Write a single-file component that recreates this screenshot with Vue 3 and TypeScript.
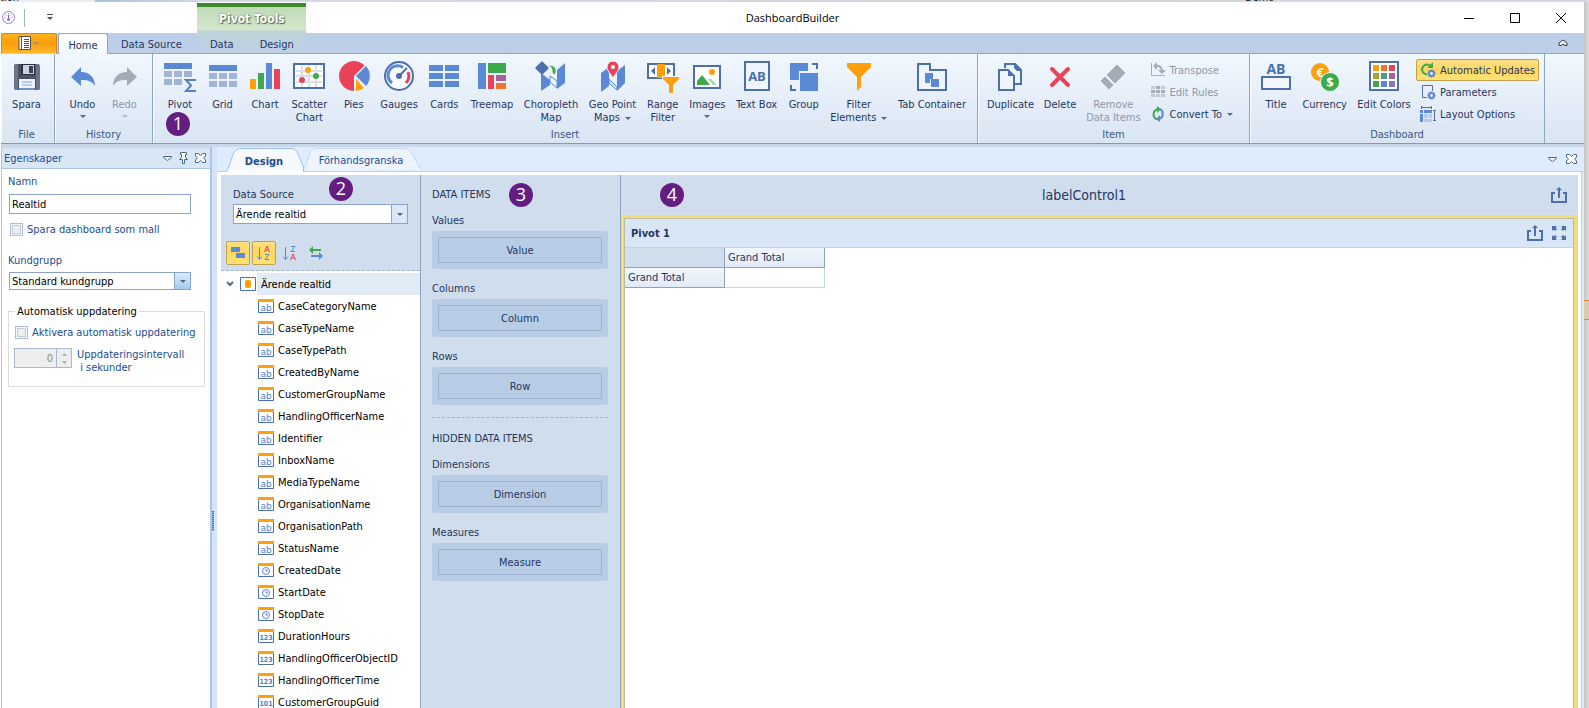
<script setup lang="ts">
import { ref } from 'vue'

interface RibbonItem {
  label: string[]
  icon: string
  arrow?: boolean
  disabled?: boolean
}
interface SmallItem {
  label: string
  icon: string
  arrow?: boolean
  disabled?: boolean
  active?: boolean
}
interface RibbonGroup {
  name: string
  items: RibbonItem[]
  small?: SmallItem[]
}

const groups: RibbonGroup[] = [
  { name: 'File', items: [{ label: ['Spara'], icon: 'save' }] },
  {
    name: 'History',
    items: [
      { label: ['Undo'], icon: 'undo', arrow: true },
      { label: ['Redo'], icon: 'redo', arrow: true, disabled: true },
    ],
  },
  {
    name: 'Insert',
    items: [
      { label: ['Pivot'], icon: 'pivot' },
      { label: ['Grid'], icon: 'grid' },
      { label: ['Chart'], icon: 'chart' },
      { label: ['Scatter', 'Chart'], icon: 'scatter' },
      { label: ['Pies'], icon: 'pies' },
      { label: ['Gauges'], icon: 'gauges' },
      { label: ['Cards'], icon: 'cards' },
      { label: ['Treemap'], icon: 'treemap' },
      { label: ['Choropleth', 'Map'], icon: 'choropleth' },
      { label: ['Geo Point', 'Maps'], icon: 'geo', arrow: true },
      { label: ['Range', 'Filter'], icon: 'range' },
      { label: ['Images'], icon: 'images', arrow: true },
      { label: ['Text Box'], icon: 'textbox' },
      { label: ['Group'], icon: 'group' },
      { label: ['Filter', 'Elements'], icon: 'filter', arrow: true },
      { label: ['Tab Container'], icon: 'tabs' },
    ],
  },
  {
    name: 'Item',
    items: [
      { label: ['Duplicate'], icon: 'duplicate' },
      { label: ['Delete'], icon: 'remove' },
      { label: ['Remove', 'Data Items'], icon: 'eraser', disabled: true },
    ],
    small: [
      { label: 'Transpose', icon: 'transpose', disabled: true },
      { label: 'Edit Rules', icon: 'rules', disabled: true },
      { label: 'Convert To', icon: 'convert', arrow: true },
    ],
  },
  {
    name: 'Dashboard',
    items: [
      { label: ['Title'], icon: 'title' },
      { label: ['Currency'], icon: 'currency' },
      { label: ['Edit Colors'], icon: 'colors' },
    ],
    small: [
      { label: 'Automatic Updates', icon: 'auto', active: true },
      { label: 'Parameters', icon: 'params' },
      { label: 'Layout Options', icon: 'layout' },
    ],
  },
]

const gear = `<g fill="#5a89d6"><circle cx="11.5" cy="11.5" r="3.2"/><path d="M10.500 7.500h2v8h-2zM7.500 10.500h8v2h-8zM8 9.300l1.300-1.300 5.700 5.700-1.300 1.300zM13.700 8l1.300 1.300-5.700 5.700L8 13.700z"/></g><circle cx="11.5" cy="11.5" r="1.4" fill="#eef4fc"/>`

const icons: Record<string, string> = {
  save: `<path d="M4 4h22l2 2v22l-2 2H4V4z" fill="#4a5263"/><path d="M3 5l1-1h3v26H4l-1-1zM25 4h3l1 2v23l-1 1h-3z" fill="#6d7688"/><rect x="10" y="4" width="14" height="11" fill="#2b3242"/><rect x="12" y="5" width="11" height="9" fill="#cdd5e2"/><rect x="18" y="6" width="4" height="7" fill="#38405a"/><rect x="8" y="19" width="16" height="11" fill="#eef3f9"/><path d="M11 22h10M11 25h10" stroke="#8ea4c4"/><rect x="8" y="28" width="16" height="2" fill="#6b93cc"/>`,
  undo: `<path d="M4 17 14 7v5c9 0 14 6 14 14-3-5-7-6-14-6v6z" fill="#5a89d6"/>`,
  redo: `<path d="M28 17 18 7v5c-9 0-14 6-14 14 3-5 7-6 14-6v6z" fill="#a4acb8"/>`,
  pivot: `<path d="M0 3h28v6H0z" fill="#5a89d6"/><path d="M0 11h8v6H0zM10 11h8v6h-8zM20 11h8v6h-8zM0 19h8v6H0zM10 19h8v6h-8z" fill="#a0b4d6"/><path d="M32 20H22l5 5.500-5 5.500h10" fill="none" stroke="#5a7fc0" stroke-width="2"/>`,
  grid: `<path d="M2 5h28v6H2z" fill="#5a89d6"/><path d="M2 13h8v6H2zM12 13h8v6h-8zM22 13h8v6h-8zM2 21h8v6H2zM12 21h8v6h-8zM22 21h8v6h-8z" fill="#a0b4d6"/>`,
  chart: `<path d="M1 19h6v10H1z" fill="#ff9f0a"/><path d="M9 13h6v16H9z" fill="#3faa4c"/><path d="M17 3h6v26h-6z" fill="#5a89d6"/><path d="M25 9h6v20h-6z" fill="#e84358"/>`,
  scatter: `<rect x="1" y="4" width="30" height="24" fill="#fff" stroke="#4c70ab" stroke-width="2"/><path d="M3 11h26M3 16h26M3 22h26M9 5v22M16 5v22M23 5v22" stroke="#dbe0e8" stroke-width="2"/><circle cx="15" cy="10" r="3" fill="#ff9f0a"/><circle cx="23" cy="16" r="3" fill="#3faa4c"/><circle cx="9" cy="20" r="3" fill="#e84358"/>`,
  pies: `<path d="M16 16 26.600 5.400A15 15 0 1 0 16 31z" fill="#e84358"/><path d="M18 16 28 6a15 15 0 0 1 0 20z" fill="#5a89d6"/><path d="M18 19l8 9a14 14 0 0 1-8 3z" fill="#ff9f0a"/>`,
  gauges: `<circle cx="16" cy="16" r="14" fill="#f7fafe" stroke="#4c70ab" stroke-width="2"/><path d="M9 23A9.500 9.500 0 0 1 20 7.500" fill="none" stroke="#5a89d6" stroke-width="3"/><path d="M25 12a10 10 0 0 1-2 11" fill="none" stroke="#e84358" stroke-width="3"/><path d="M16 16l8-8" stroke="#4c70ab" stroke-width="2"/><circle cx="16" cy="16" r="3" fill="#4c70ab"/>`,
  cards: `<path d="M1 5h14v6H1zM17 5h14v6H17zM1 13h14v6H1zM17 13h14v6H17zM1 21h14v6H1zM17 21h14v6H17z" fill="#5a89d6"/>`,
  treemap: `<path d="M2 3h8v26H2z" fill="#5a89d6"/><path d="M12 3h18v10H12z" fill="#3faa4c"/><path d="M12 15h6v14h-6z" fill="#e84358"/><path d="M20 15h10v6H20z" fill="#a5639c"/><path d="M20 23h10v6H20z" fill="#f3722c"/>`,
  choropleth: `<path d="M6 13l9 7v5l-9 6zM22 10l8-7v20l-8 6z" fill="#5a89d6"/><path d="M15 16l7 5v7l-7-6z" fill="#eef5fd" stroke="#5a89d6"/><rect x="2" y="3" width="10" height="10" rx="1" transform="rotate(45 7 8)" fill="#4c70ab"/><path d="M13 5c7 0 10 4 7 10-3-1-3-3-3-5 0-2-2-4-4-5z" fill="#3faa4c" stroke="#eef5fd"/>`,
  geo: `<path d="M5 13l8-6v19l-8 6zM21 11l8-6v18l-8 8z" fill="#5a89d6"/><path d="M13 19l8 8v3l-8-7z" fill="#dbe7f9" stroke="#5a89d6"/><path d="M17 1a6 6 0 0 1 6 6c0 4-4 7-6 11-2-4-6-7-6-11a6 6 0 0 1 6-6z" fill="#e84358" stroke="#eef5fd" /><circle cx="17" cy="7" r="2" fill="#fff"/>`,
  range: `<rect x="1" y="4" width="26" height="14" fill="#fff" stroke="#4c70ab" stroke-width="2"/><path d="M10 4h8v14h-8z" fill="#ff9f0a"/><path d="M8 7v8l-4-4zM20 7v8l4-4z" fill="#4c70ab"/><path d="M15 16h18v3l-6 7v7h-6v-7l-6-7z" fill="#eef5fd"/><path d="M16 17h16v2l-6 6v8h-4v-8l-6-6z" fill="#ff9f0a"/>`,
  images: `<rect x="3" y="6" width="26" height="22" fill="#fff" stroke="#4c70ab" stroke-width="2"/><path d="M6 25v-4l5-6 8 10z" fill="#3faa4c"/><path d="M17 19h3l6 6h-4z" fill="#a6d8ae"/><circle cx="21" cy="12" r="3" fill="#ff9f0a"/>`,
  textbox: `<rect x="4" y="2" width="24" height="28" fill="#eef5fd" stroke="#4c70ab" stroke-width="2"/><text x="16" y="21" text-anchor="middle" font-family="Open Sans, sans-serif" font-weight="700" font-size="13" fill="#4c70ab">AB</text>`,
  group: `<path d="M2 3h18v8h-9v9H2z" fill="#5a89d6"/><path d="M12 13h18v18H12z" fill="#5a89d6"/><path d="M24 4h5v5M3 25v5h5" fill="none" stroke="#4c70ab" stroke-width="2"/>`,
  filter: `<path d="M4 3h24v4l-10 10v10l-4 4V17L4 7z" fill="#ff9f0a"/>`,
  tabs: `<path d="M2 30V4h12v6h16v20z" fill="#eef5fd" stroke="#4c70ab" stroke-width="2"/><path d="M9 13h8v6h-3v4H9z" fill="#5a89d6"/><path d="M15 19h8v8h-8z" fill="#5a89d6"/>`,
  duplicate: `<path d="M11 8V4h10l6 6v14h-6" fill="none" stroke="#4c70ab" stroke-width="2"/><path d="M20 3l8 8h-5l-3-3z" fill="#4c70ab"/><path d="M5 10h9l6 6v14H5z" fill="#eef5fd" stroke="#4c70ab" stroke-width="2"/><path d="M14 9l7 7h-7z" fill="#4c70ab"/>`,
  remove: `<path d="M8 9l16 16M24 9L8 25" stroke="#e84358" stroke-width="4" stroke-linecap="round"/>`,
  eraser: `<path d="M20 5l8 8-10 10-8-8z" fill="#a4acb8" stroke="#a4acb8"/><path d="M8 17l8 8-4 4-8-8z" fill="#a4acb8" stroke="#a4acb8"/>`,
  title: `<text x="16" y="14" text-anchor="middle" font-family="Open Sans, sans-serif" font-weight="700" font-size="14" fill="#4c70ab">AB</text><rect x="2" y="17" width="28" height="12" fill="#f2f7fd" stroke="#4c70ab" stroke-width="2"/>`,
  currency: `<circle cx="11" cy="12" r="9" fill="#ff9f0a"/><text x="11" y="17" text-anchor="middle" font-family="Open Sans, sans-serif" font-weight="700" font-size="13" fill="#fff">€</text><circle cx="21" cy="22" r="9.5" fill="#3faa4c" stroke="#eef5fd"/><text x="21" y="27" text-anchor="middle" font-family="Open Sans, sans-serif" font-weight="700" font-size="13" fill="#fff">$</text>`,
  colors: `<rect x="2" y="2" width="28" height="28" fill="#fff" stroke="#4c70ab" stroke-width="2"/><path d="M5 5h6v6H5z" fill="#ff9f0a"/><path d="M13 5h6v6h-6z" fill="#f3722c"/><path d="M21 5h6v6h-6z" fill="#e84358"/><path d="M5 13h6v6H5z" fill="#a3a52c"/><path d="M13 13h6v6h-6z" fill="#4d9b8e"/><path d="M21 13h6v6h-6z" fill="#a5639c"/><path d="M5 21h6v6H5z" fill="#3faa4c"/><path d="M13 21h6v6h-6z" fill="#5a89d6"/><path d="M21 21h6v6h-6z" fill="#8577b5"/>`,
  transpose: `<path d="M1.500 1v12.500H15" fill="none" stroke="#a4acb8"/><path d="M5 4c5-1 7 2 7 5" fill="none" stroke="#a4acb8" stroke-width="2"/><path d="M7 0v8L3 4zM8 8h8l-4 4z" fill="#a4acb8"/>`,
  rules: `<path d="M1 2h4v3H1zM11 2h4v3h-4zM1 10h4v3H1zM6 10h4v3H6zM11 10h4v3h-4z" fill="#c3cad5"/><path d="M6 2h4v3H6zM1 6h4v3H1zM6 6h4v3H6zM11 6h4v3h-4z" fill="#a4acb8"/>`,
  convert: `<path d="M7 13.500A5.500 5.500 0 0 1 8 3" fill="none" stroke="#3faa4c" stroke-width="2"/><path d="M7 0l4 3-4 4z" fill="#3faa4c"/><path d="M10 3a5.500 5.500 0 0 1-1 10" fill="none" stroke="#5a89d6" stroke-width="2"/><path d="M10 9v7l-4-3z" fill="#5a89d6"/>`,
  auto: `<path d="M7 12.500A5 5 0 1 1 10 3.500" fill="none" stroke="#3faa4c" stroke-width="2"/><path d="M13 0v6H7z" fill="#3faa4c"/>${gear}`,
  params: `<path d="M7 13.500H2.500v-12h10V7" fill="none" stroke="#4c70ab"/>${gear}`,
  layout: `<path d="M1 1.500h11M1.500 0v3M11.500 0v3M14.500 4v11M13 4.500h3M13 14.500h3" stroke="#4c70ab" fill="none"/><path d="M0 4h3v3H0zM4 4h8v3H4zM0 8h3v8H0z" fill="#5a89d6"/><path d="M4 8h4v4H4zM9 8h3v4H9zM4 13h8v3H4z" fill="#b4c8ea"/>`,
}

interface Field {
  name: string
  type: 'ab' | 'date' | '123' | '101'
}
const fields: Field[] = [
  ...[
    'CaseCategoryName', 'CaseTypeName', 'CaseTypePath', 'CreatedByName', 'CustomerGroupName',
    'HandlingOfficerName', 'Identifier', 'InboxName', 'MediaTypeName', 'OrganisationName',
    'OrganisationPath', 'StatusName',
  ].map((name): Field => ({ name, type: 'ab' })),
  ...['CreatedDate', 'StartDate', 'StopDate'].map((name): Field => ({ name, type: 'date' })),
  ...['DurationHours', 'HandlingOfficerObjectID', 'HandlingOfficerTime'].map((name): Field => ({ name, type: '123' })),
  { name: 'CustomerGroupGuid', type: '101' },
]

const dataSections = [
  { title: 'DATA ITEMS', slots: [['Values', 'Value'], ['Columns', 'Column'], ['Rows', 'Row']] },
  { title: 'HIDDEN DATA ITEMS', slots: [['Dimensions', 'Dimension'], ['Measures', 'Measure']] },
]

const name = ref('Realtid')
const asTemplate = ref(false)
const autoUpdate = ref(false)
const interval = ref(0)
</script>

<template>
  <div class="desktop">
    <div class="behind" aria-hidden="true"><span>tion</span><i></i><span class="far">Demo</span></div>
    <div class="window">
      <header class="head">
        <div class="quick">
          <svg width="17" height="17" viewBox="0 0 17 17">
            <defs><linearGradient id="lg" x2="0" y2="1"><stop stop-color="#b06be8" /><stop offset="1" stop-color="#7c86f4" /></linearGradient></defs>
            <circle cx="7.5" cy="8.5" r="6" fill="none" stroke="url(#lg)" />
            <path d="M7.500 4v1M3.500 8.500h1M11.500 8.500h-1M4.500 5.500l1 1M10.500 5.500l-1 1" stroke="#a070ee" />
            <path d="M7.500 6v5" stroke="#7a55dd" /><circle cx="7.5" cy="10.5" r="1.500" fill="#8a6cf0" />
          </svg>
          <span class="quick-line"></span>
          <svg width="6" height="7" viewBox="0 0 6 7"><path d="M0 .5h6" stroke="#555" /><path d="M0 3h6L3 6z" fill="#555" /></svg>
        </div>
        <h1 class="title">DashboardBuilder</h1>
        <div class="winbtns">
          <button aria-label="Minimize"><svg width="10" height="10"><path d="M0 5.500h10" stroke="#000" /></svg></button>
          <button aria-label="Maximize"><svg width="10" height="10"><path d="M.5.5h9v9h-9z" stroke="#000" fill="none" /></svg></button>
          <button aria-label="Close"><svg width="10" height="10"><path d="M0 0l10 10M10 0L0 10" stroke="#000" /></svg></button>
        </div>
        <nav class="tabs-left">
          <button class="app-btn" aria-label="Application menu">
            <svg width="22" height="15" viewBox="0 0 22 15">
              <path d="M1 .5h11.500v13H1z" fill="#fff" stroke="#555" /><path d="M3.500 1v12" stroke="#555" /><path d="M6 3.500h5M6 5.500h5M6 7.500h5M6 9.500h5M6 11.500h5" stroke="#555" />
              <path d="M15 6h6l-3 3z" fill="#a8926a" />
            </svg>
          </button>
          <button class="rtab active">Home</button>
          <button class="rtab">Data Source</button>
        </nav>
        <div class="context">
          <strong>Pivot Tools</strong>
          <div class="context-tabs"><button class="rtab">Data</button><button class="rtab">Design</button></div>
        </div>
        <div class="tabs-right">
          <button aria-label="Collapse ribbon"><svg width="10" height="8" viewBox="0 0 10 8"><path d="M1 4l4-3 4 3v2.500H7L5 5 3 6.500H1z" fill="#fff" stroke="#2a3a55" /></svg></button>
        </div>
      </header>

      <section class="ribbon">
        <div v-for="g in groups" :key="g.name" class="rgroup" :class="'g-' + g.name.toLowerCase()">
          <div class="rbody">
            <button v-for="b in g.items" :key="b.icon" class="big" :disabled="b.disabled">
              <svg width="32" height="32" viewBox="0 0 32 32" overflow="visible" v-html="icons[b.icon]"></svg>
              <span v-for="(l, i) in b.label" :key="i">{{ l }}<i v-if="b.arrow && i === 1" class="arrow inline"></i></span>
              <i v-if="b.arrow && b.label.length === 1" class="arrow under"></i>
            </button>
            <div v-if="g.small" class="smalls">
              <button v-for="s in g.small" :key="s.label" class="small" :class="{ on: s.active }" :disabled="s.disabled">
                <svg width="16" height="16" viewBox="0 0 16 16" v-html="icons[s.icon]"></svg>
                <span>{{ s.label }}</span><i v-if="s.arrow" class="arrow inline"></i>
              </button>
            </div>
          </div>
          <div class="rcaption">{{ g.name }}</div>
        </div>
        <span class="badge b1">1</span>
      </section>

      <main class="dock">
        <aside class="props">
          <div class="props-head">
            <h2>Egenskaper</h2>
            <button aria-label="Menu"><svg width="9" height="7" viewBox="0 0 9 7"><path d="M.5 1.500h8v1l-4 3-4-3z" fill="#fff" stroke="#47698c" /></svg></button>
            <button aria-label="Pin"><svg width="9" height="12" viewBox="0 0 9 12"><path d="M1.500.5h6v2h-1v3l2 2h-3v4h-2v-4h-3l2-2v-3h-1z" fill="#fff" stroke="#47698c" /></svg></button>
            <button aria-label="Close"><svg width="11" height="10" viewBox="0 0 11 10"><path d="M.5.5h3l2 2 2-2h3v2.500L8.500 5l2 2v2.500h-3l-2-2-2 2h-3V7l2-2-2-2z" fill="#fff" stroke="#47698c" /></svg></button>
          </div>
          <form class="form" @submit.prevent>
            <label class="lbl" for="namn">Namn</label>
            <input id="namn" v-model="name" class="text" type="text" />
            <label class="check"><input v-model="asTemplate" type="checkbox" />Spara dashboard som mall</label>
            <label class="lbl kund" for="kund">Kundgrupp</label>
            <span class="combo glossy">
              <select id="kund"><option>Standard kundgrupp</option></select>
              <i class="drop"><i class="arrow"></i></i>
            </span>
            <fieldset>
              <legend>Automatisk uppdatering</legend>
              <label class="check"><input v-model="autoUpdate" type="checkbox" />Aktivera automatisk uppdatering</label>
              <div class="spin-row">
                <span class="spin">
                  <input id="iv" v-model="interval" type="text" disabled />
                  <i><svg width="5" height="11" viewBox="0 0 5 11"><path d="M0 3h5L2.500 0zM0 8h5l-2.500 3z" fill="#a9b0bb" /></svg></i>
                </span>
                <label for="iv">Uppdateringsintervall<br />&nbsp;i sekunder</label>
              </div>
            </fieldset>
          </form>
        </aside>
        <div class="splitter"><i></i></div>

        <section class="doc">
          <div class="doc-tabs">
            <button class="dtab sel">
              <svg width="78" height="24" viewBox="0 0 78 24"><path d="M0 24C5 18 6 3 11 1.500Q12 .5 14 .5H66Q69 .5 71 4L77.500 19V24z" fill="#f6faff" stroke="#9dbfe8" /><path d="M1 24h76v-1H1z" fill="#fff" /></svg>
              <span>Design</span>
            </button>
            <button class="dtab">
              <svg width="120" height="23" viewBox="0 0 120 23"><path d="M1 23C5 18 7 3 11 1.500Q12 .5 14 .5H103Q107 .5 109 4L119 22" fill="#edf4fe" stroke="#c3d9f5" /></svg>
              <span>Förhandsgranska</span>
            </button>
            <div class="doc-tools">
              <button aria-label="Menu"><svg width="9" height="7" viewBox="0 0 9 7"><path d="M.5 1.500h8v1l-4 3-4-3z" fill="#fff" stroke="#47698c" /></svg></button>
              <button aria-label="Close"><svg width="11" height="10" viewBox="0 0 11 10"><path d="M.5.5h3l2 2 2-2h3v2.500L8.500 5l2 2v2.500h-3l-2-2-2 2h-3V7l2-2-2-2z" fill="#fff" stroke="#47698c" /></svg></button>
            </div>
          </div>

          <div class="designer">
            <div class="source">
              <div class="source-top">
                <label for="ds">Data Source</label>
                <span class="combo">
                  <select id="ds"><option>Ärende realtid</option></select>
                  <i class="drop"><i class="arrow"></i></i>
                </span>
                <div class="tools">
                  <button class="on" aria-label="Group by type"><svg width="16" height="16"><path d="M1 2h9v5H1zM6 8h9v5H6z" fill="#5a89d6" /></svg></button>
                  <button class="on" aria-label="Sort ascending"><svg width="16" height="16"><path d="M3.500 2v12M1 11.500l2.500 3 2.500-3" stroke="#5a89d6" fill="none" /><path d="M8.500 7l2.500-6 2.500 6M9.500 5h3" stroke="#e84358" fill="none" /><path d="M9 9.500h4l-4 5h4" stroke="#5a89d6" fill="none" /></svg></button>
                  <button aria-label="Sort descending"><svg width="16" height="16"><path d="M3.500 2v12M1 11.500l2.500 3 2.500-3" stroke="#5a89d6" fill="none" /><path d="M9 1.500h4l-4 5h4" stroke="#5a89d6" fill="none" /><path d="M8.500 15L11 9l2.500 6M9.500 13h3" stroke="#e84358" fill="none" /></svg></button>
                  <button aria-label="Refresh"><svg width="16" height="16"><path d="M1 5l4-4v3h8v2H5v3z" fill="#3faa4c" /><path d="M15 11l-4-4v3H3v2h8v3z" fill="#5a89d6" /></svg></button>
                </div>
                <span class="badge b2">2</span>
              </div>
              <ul class="tree">
                <li class="root">
                  <svg width="8" height="6" viewBox="0 0 8 6"><path d="M1 1l3 3 3-3" fill="none" stroke="#5a6a80" stroke-width="2" /></svg>
                  <svg class="db" width="16" height="14" viewBox="0 0 16 14"><path d="M.5.5h15v13H.5z" fill="#fff" stroke="#4c70ab" /><rect x="5" y="3" width="6" height="8" rx="2" fill="#ff9f0a" /></svg>
                  <span>Ärende realtid</span>
                </li>
                <li v-for="f in fields" :key="f.name" class="leaf">
                  <svg width="16" height="14" viewBox="0 0 16 14">
                    <path d="M.5.5h15v13H.5z" fill="#fff" stroke="#4c70ab" /><path d="M0 0h16v3H0z" fill="#ff9f0a" />
                    <g v-if="f.type === 'date'" fill="none" stroke="#5a89d6"><circle cx="8" cy="8" r="3.500" /><path d="M8 6v2h2" /></g>
                    <text v-else-if="f.type === 'ab'" x="8" y="12" text-anchor="middle" class="ab">ab</text>
                    <text v-else x="8" y="11" text-anchor="middle" class="num">{{ f.type }}</text>
                  </svg>
                  <span>{{ f.name }}</span>
                </li>
              </ul>
            </div>

            <div class="items">
              <section v-for="s in dataSections" :key="s.title">
                <h3>{{ s.title }}</h3>
                <div v-for="[label, slot] in s.slots" :key="label" class="slot">
                  <h4>{{ label }}</h4>
                  <div class="well"><button>{{ slot }}</button></div>
                </div>
              </section>
              <span class="badge b3">3</span>
            </div>

            <div class="board">
              <div class="board-head">
                <h2>labelControl1</h2>
                <button aria-label="Export"><svg width="16" height="16" viewBox="0 0 16 16"><path d="M4 6H1v9h14V6h-3" fill="none" stroke="#4c70ab" stroke-width="2" /><path d="M8 11V2" stroke="#4c70ab" stroke-width="2" /><path d="M8 0l3 3H5z" fill="#4c70ab" /></svg></button>
                <span class="badge b4">4</span>
              </div>
              <article class="widget">
                <div class="widget-head">
                  <h3>Pivot 1</h3>
                  <button aria-label="Export"><svg width="16" height="16" viewBox="0 0 16 16"><path d="M4 6H1v9h14V6h-3" fill="none" stroke="#4c70ab" stroke-width="2" /><path d="M8 11V2" stroke="#4c70ab" stroke-width="2" /><path d="M8 0l3 3H5z" fill="#4c70ab" /></svg></button>
                  <button aria-label="Maximize"><svg width="14" height="14" viewBox="0 0 14 14"><path d="M0 0h5L3.500 1.500 5 3 3 5 1.500 3.500 0 5zM14 0v5l-1.500-1.500L11 5 9 3l1.500-1.500L9 0zM0 14V9l1.500 1.500L3 9l2 2-1.500 1.500L5 14zM14 14H9l1.500-1.500L9 11l2-2 1.500 1.500L14 9z" fill="#4c70ab" /></svg></button>
                </div>
                <table class="pivot">
                  <tbody>
                    <tr><td class="corner"></td><th scope="col">Grand Total</th></tr>
                    <tr><th scope="row">Grand Total</th><td class="val"></td></tr>
                  </tbody>
                </table>
              </article>
            </div>
          </div>
        </section>
      </main>
    </div>
    <div class="edge" aria-hidden="true"><i></i></div>
  </div>
</template>

<style>
body {
  margin: 0;
}
</style>

<style scoped>
* {
  box-sizing: border-box;
}
.desktop {
  height: 100vh;
  display: grid;
  grid-template: 2px minmax(0, 1fr) / minmax(0, 1fr) 5px;
  overflow: hidden;
  background: #e2e2e2;
  font: 11px/13px 'DejaVu Sans Condensed', 'DejaVu Sans', sans-serif;
  color: #1f3763;
}
button {
  font: inherit;
  color: inherit;
  border: 0;
  padding: 0;
  background: none;
}
h1, h2, h3, h4 {
  margin: 0;
  font: inherit;
}
svg {
  display: block;
  flex: none;
}
.behind {
  grid-column: 1 / 3;
  display: flex;
  align-items: flex-end;
  overflow: hidden;
  background: #d5d9df;
  color: #222;
  line-height: 9px;
}
.behind span {
  padding-right: 76px;
  background: #e8ebef;
}
.behind i {
  flex: 1;
  height: 2px;
  background: linear-gradient(90deg, #a9c2dd, #d4dae2 10%, #d4d6da);
}
.behind .far {
  width: 344px;
  padding: 0;
  background: #d5d9df;
}
.window {
  display: flex;
  flex-direction: column;
  min-height: 0;
  padding-left: 1px;
  background: #fff;
}
.edge {
  background: linear-gradient(90deg, #c4c4c4, #dedede);
  padding-top: 298px;
}
.edge i {
  display: block;
  height: 20px;
  background: #d8ccb0;
  border: solid #e08a30;
  border-width: 1px 0;
}

/* title bar and tabs */
.head {
  flex: none;
  display: grid;
  grid-template: 31px 21px / 196px 109px 1fr;
}
.quick {
  grid-area: 1 / 1;
  display: flex;
  align-items: center;
}
.quick-line {
  width: 1px;
  height: 18px;
  margin: 0 22px 0 6px;
  background: #9bb2cc;
}
.title {
  grid-area: 1 / 1 / 2 / 4;
  place-self: center;
  font: 11px/16px 'Open Sans', 'Noto Sans', sans-serif;
  color: #000;
}
.winbtns {
  grid-area: 1 / 3;
  justify-self: end;
  display: flex;
}
.winbtns button {
  width: 46px;
  display: grid;
  place-items: center;
}
.tabs-left {
  grid-area: 2 / 1;
  display: flex;
  background: #bdcfe8;
  border-bottom: 1px solid #8ea7c9;
}
.app-btn {
  width: 56px;
  height: 21px;
  display: grid;
  place-items: center;
  background: linear-gradient(#ffb31c, #fb9d0a 50%, #ffb92a);
  border: 1px solid #d9822b;
  border-bottom-color: #ffcf5c;
  border-radius: 3px 3px 0 0;
  flex: none;
}
.rtab {
  flex: none;
  padding: 3px 13px 0;
  white-space: nowrap;
}
.rtab.active {
  width: 50px;
  height: 21px;
  margin-left: 1px;
  padding: 2px 0 0;
  background: linear-gradient(#fff, #f1f7fe);
  border: 1px solid #8ea7c9;
  border-bottom: 0;
  border-radius: 3px 3px 0 0;
}
.context {
  grid-area: 1 / 2 / 3 / 3;
  display: grid;
  grid-template-rows: 1fr 21px;
  text-align: center;
  margin-top: 1px;
  border-top: 4px solid #3f8a2c;
  background: linear-gradient(#bfdab8, #d3e6cd 50%, #bdd4d6 52%, #bdcfe8);
  border-bottom: 1px solid #8ea7c9;
  z-index: 1;
}
.context strong {
  align-self: center;
  font-size: 12px;
  color: #fff;
  text-shadow: 1px 1px 1px #4a6a4a, 0 0 2px #5f8060;
}
.context-tabs {
  display: flex;
  justify-content: center;
}
.tabs-right {
  grid-area: 2 / 3;
  display: flex;
  justify-content: flex-end;
  align-items: center;
  padding-right: 16px;
  background: #bdcfe8;
  border-bottom: 1px solid #8ea7c9;
}

/* ribbon */
.ribbon {
  position: relative;
  flex: none;
  display: flex;
  height: 90px;
  background: linear-gradient(#f1f7fe, #e3ecf8 60%, #d9e5f2);
  border-bottom: 1px solid #8399b8;
}
.rgroup {
  display: flex;
  flex-direction: column;
  border-right: 1px solid #8ea5c4;
  box-shadow: inset 1px 0 #f6faff;
  padding: 5px 4px 0;
}
.g-file {
  width: 54px;
  padding: 5px 5px 0 3px;
}
.g-history {
  width: 98px;
}
.g-insert {
  width: 825px;
  padding: 5px 6px 0;
}
.g-item {
  width: 272px;
}
.g-dashboard {
  width: 295px;
  padding: 5px 5px 0;
}
.rbody {
  display: flex;
  flex: 1;
  justify-content: space-between;
}
.g-file .rbody,
.g-history .rbody {
  justify-content: center;
}
.rcaption {
  text-align: center;
  height: 15px;
  color: #3b5886;
}
.big {
  min-width: 42px;
  padding: 1px 5px 0;
  display: flex;
  flex-direction: column;
  align-items: center;
  white-space: nowrap;
}
.big svg {
  margin-bottom: 6px;
}
button:disabled {
  color: #8e98a8;
}
.arrow {
  display: inline-block;
  border: 3px solid transparent;
  border-top-color: #5b6880;
  border-bottom: 0;
}
.arrow.inline {
  margin-left: 5px;
  vertical-align: middle;
}
.arrow.under {
  margin-top: 4px;
}
button:disabled .arrow {
  border-top-color: #b3bac6;
}
.smalls {
  display: flex;
  flex-direction: column;
  align-items: flex-start;
}
.small {
  height: 22px;
  padding: 0 3px;
  display: flex;
  align-items: center;
  gap: 4px;
  border: 1px solid transparent;
  white-space: nowrap;
}
.small .arrow.inline {
  margin-left: 1px;
}
.small.on,
.tools .on {
  background: linear-gradient(#fddf85, #fed75e 50%, #ffe277);
  border: 1px solid #c5a04a;
  border-radius: 2px;
}
.g-item .rbody {
  padding-right: 8px;
}

/* numbered callouts */
.badge {
  position: absolute;
  width: 24px;
  height: 24px;
  border-radius: 50%;
  background: #641e82;
  color: #fff;
  font: 18px/23px 'Open Sans', 'Noto Sans', sans-serif;
  text-align: center;
}
.b1 {
  left: 165px;
  top: 58px;
}
.b2 {
  left: 108px;
  top: 2px;
}
.b3 {
  left: 88px;
  top: 8px;
}
.b4 {
  left: 39px;
  top: 8px;
}

/* docking area */
.dock {
  flex: 1;
  min-height: 0;
  display: flex;
  padding-top: 3px;
  background: #c9d7ea;
}
.props {
  width: 210px;
  flex: none;
  margin-top: 1px;
  border: solid #a9c5e8;
  border-width: 0 1px;
  background: #fff;
}
.props-head {
  display: flex;
  align-items: center;
  gap: 7px;
  height: 21px;
  padding: 0 4px 0 2px;
  background: #d9e6f6;
  border-bottom: 1px solid #a9c5e8;
  color: #1c4c93;
}
.props-head h2 {
  flex: 1;
}
.form {
  padding: 6px 5px 0 6px;
  color: #1c4c93;
}
.lbl {
  display: block;
}
.text {
  display: block;
  width: 182px;
  height: 20px;
  margin: 6px 0 8px 1px;
  padding: 0 2px;
  border: 1px solid #8ca3c8;
  font: inherit;
  color: #000;
}
.check {
  display: flex;
  align-items: center;
  gap: 4px;
  height: 15px;
  padding-left: 2px;
  white-space: nowrap;
}
.check input {
  appearance: none;
  width: 13px;
  height: 13px;
  margin: 0;
  flex: none;
  background: #eceef1;
  border: 1px solid #a9bfdc;
  box-shadow: inset 0 0 0 1px #f3f6fa, inset 0 0 0 2px #c8cbd0;
}
.kund {
  margin: 17px 0 5px;
}
.combo {
  display: flex;
  position: relative;
  height: 20px;
  background: #fff;
  border: 1px solid #8ca3c8;
}
.combo select {
  flex: 1;
  appearance: none;
  border: 0;
  margin: 0;
  padding: 0 20px 0 2px;
  background: none;
  font: inherit;
  color: #000;
}
.drop {
  position: absolute;
  right: 0;
  top: 0;
  bottom: 0;
  width: 16px;
  display: grid;
  place-items: center;
  border-left: 1px solid #8ca3c8;
  background: #dbe8f8;
  pointer-events: none;
}
.glossy {
  width: 182px;
  height: 18px;
  margin-left: 1px;
}
.glossy .drop {
  background: linear-gradient(#dcebfb, #a5caf3);
}
fieldset {
  margin: 15px 0 0;
  min-width: 0;
  height: 82px;
  padding: 7px 0 0 4px;
  border: 1px solid #dcdcdc;
}
legend {
  margin-left: 2px;
  padding: 0 2px;
  color: #000;
}
.spin-row {
  display: flex;
  margin-top: 8px;
  gap: 5px;
  padding-left: 1px;
}
.spin {
  display: flex;
  width: 58px;
  height: 20px;
  background: #eee;
  border: 1px solid #a9b9d2;
}
.spin input {
  width: 41px;
  border: 0;
  padding: 0 3px;
  text-align: right;
  font: inherit;
  color: #8b8b8b;
  background: none;
}
.spin i {
  flex: 1;
  display: grid;
  place-items: center;
  border-left: 1px solid #a9b9d2;
}
.splitter {
  width: 6px;
  flex: none;
  background: #d5e3f6;
  border-left: 1px solid #a9c5e8;
  display: flex;
  align-items: center;
  padding-top: 186px;
}
.splitter i {
  width: 2px;
  height: 20px;
  background: repeating-linear-gradient(#4677b8 0 1px, #8fb1de 1px 2px);
}
.doc {
  flex: 1;
  min-width: 0;
  display: flex;
  flex-direction: column;
  background: #dfecfe;
}
.doc-tabs {
  flex: none;
  height: 25px;
  display: flex;
  align-items: flex-end;
  padding-left: 9px;
  border-bottom: 1px solid #b9d3f5;
  color: #1c4c93;
}
.dtab {
  position: relative;
  width: 76px;
  height: 24px;
  padding-top: 2px;
}
.dtab svg {
  position: absolute;
  left: 0;
  bottom: 0;
}
.dtab span {
  position: relative;
}
.dtab.sel {
  font-weight: 700;
  z-index: 1;
  margin-bottom: -1px;
}
.dtab + .dtab {
  width: 118px;
}
.doc-tools {
  margin-left: auto;
  align-self: center;
  display: flex;
  align-items: center;
  gap: 9px;
  padding-right: 7px;
}
.designer {
  flex: 1;
  min-height: 0;
  display: flex;
  margin-right: 2px;
  padding: 3px 3px 0 4px;
  background: #fff;
  border-right: 1px solid #b9d3f5;
}
.source {
  width: 200px;
  flex: none;
  border-right: 1px solid #8ca3c2;
  overflow: hidden;
}
.source-top {
  position: relative;
  height: 96px;
  padding: 13px 12px 0;
  background: #d0dded;
  border-bottom: 1px dashed #a4b2c6;
}
.source-top label {
  display: block;
  margin-bottom: 3px;
}
.tools {
  display: flex;
  gap: 2px;
  margin: 17px 0 0 -7px;
}
.tools button {
  width: 24px;
  height: 24px;
  display: grid;
  place-items: center;
}
.tree {
  list-style: none;
  margin: 2px 0 0;
  padding: 0;
  color: #000;
}
.tree li {
  display: flex;
  align-items: center;
  height: 22px;
  white-space: nowrap;
}
.root {
  padding-left: 5px;
  background: linear-gradient(90deg, #fff 36px, #e1ebf5 36px);
}
.db {
  margin: 0 5px 0 6px;
}
.leaf {
  padding-left: 37px;
  gap: 4px;
}
.ab {
  font: 9px 'DejaVu Sans', sans-serif;
  fill: #4f7fd0;
}
.num {
  font: 700 7px 'DejaVu Sans Condensed', sans-serif;
  fill: #4f7fd0;
}
.items {
  position: relative;
  width: 200px;
  flex: none;
  padding: 0 12px 0 11px;
  background: #d0dded;
  border-right: 1px solid #8ca3c2;
}
.items section {
  padding-top: 13px;
}
.items section + section {
  margin-top: 12px;
  padding-top: 14px;
  border-top: 1px dashed #a4b2c6;
}
.slot {
  padding-top: 13px;
}
.slot + .slot {
  padding-top: 13px;
}
.well {
  height: 38px;
  margin-top: 4px;
  padding: 6px;
  border-radius: 3px;
  background: #b8cce6;
}
.well button {
  width: 100%;
  height: 26px;
  border: 1px solid #9fb3d1;
  border-radius: 2px;
}
.board {
  flex: 1;
  min-width: 0;
  display: flex;
  flex-direction: column;
  background: #d0dded;
}
.board-head {
  position: relative;
  flex: none;
  height: 40px;
  display: flex;
  align-items: center;
  padding: 0 11px 0 0;
}
.board-head h2 {
  flex: 1;
  font-size: 14px;
  line-height: 18px;
  text-align: center;
  padding-right: 4px;
}
.widget {
  flex: 1;
  min-height: 0;
  border: solid #f3da7a;
  border-width: 3px 4px 0 3px;
  background: #fff;
  box-shadow: inset 1px 1px #b9bda4, inset -1px 0 #b9bda4;
}
.widget-head {
  display: flex;
  align-items: center;
  height: 29px;
  margin: 1px 1px 0;
  padding: 0 7px 0 6px;
  background: #d8e6f8;
  border-bottom: 1px solid #c3d2e6;
}
.widget-head h3 {
  flex: 1;
  font-weight: 700;
}
.widget-head button + button {
  margin-left: 9px;
}
.pivot {
  border-collapse: separate;
  border-spacing: 0;
  table-layout: fixed;
  width: 200px;
  margin-left: 1px;
}
.pivot th,
.pivot td {
  height: 20px;
  padding: 0 3px;
  text-align: left;
  font-weight: 400;
  border: solid #8ca3c2;
  border-width: 0 1px 1px 0;
}
.pivot th {
  background: linear-gradient(#f1f6fd, #e1ebf7);
}
.pivot .corner {
  background: #d0dded;
}
.pivot .val {
  border-color: #c0d6f2;
}
</style>
